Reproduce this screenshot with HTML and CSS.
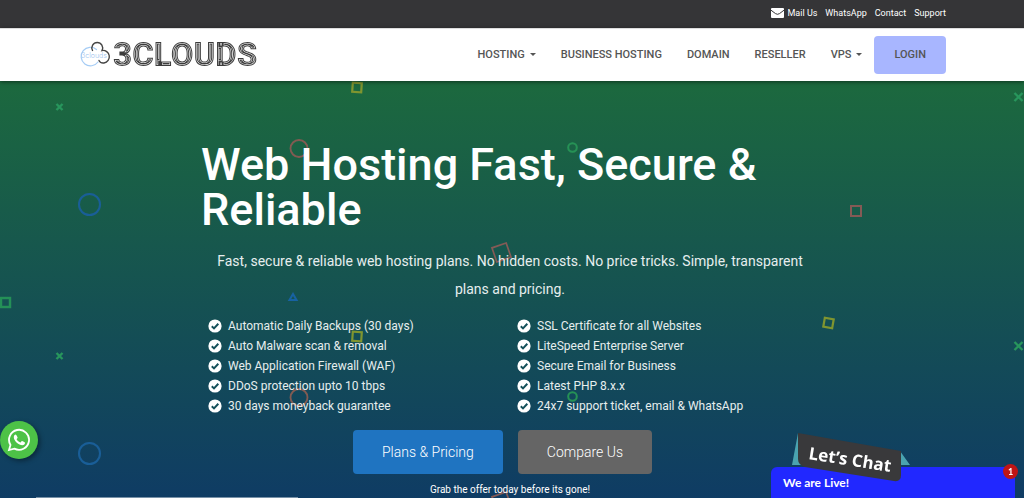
FILE: index.html
```html
<!DOCTYPE html>
<html lang="en">
<head>
<meta charset="utf-8">
<meta name="viewport" content="width=device-width, initial-scale=1">
<title>3Clouds</title>
<link rel="stylesheet" href="styles.css">
</head>
<body>
<svg class="sprite" aria-hidden="true">
  <symbol id="check" viewBox="0 0 14 14"><circle cx="7" cy="7" r="6.6" fill="#fff"/><path d="M3.8 7.3 6 9.4 10.3 4.8" fill="none" stroke="#14505a" stroke-width="2"/></symbol>
</svg>
<div class="topbar">
  <nav class="wrap toplinks" aria-label="Contact">
    <a href="#mail"><svg class="mail" viewBox="0 0 13 10"><rect width="13" height="10" rx="1" fill="#fff"/><path d="M0 2.2 4.5 5.6Q6.5 7 8.500 5.600L13 2.200" fill="none" stroke="#353537" stroke-width="1"/></svg>Mail Us</a>
    <a href="#whatsapp">WhatsApp</a>
    <a href="#contact">Contact</a>
    <a href="#support">Support</a>
  </nav>
</div>
<header class="header">
  <div class="wrap bar">
    <a class="logo" href="#home" aria-label="3Clouds home">
      <svg width="190" height="38" viewBox="0 0 190 38">
        <defs><clipPath id="word"><text class="brand" x="35" y="30">3CLOUDS</text></clipPath></defs>
        <g fill="none" stroke-linecap="round">
          <path d="M18.500 13.500A9.300 9.300 0 1 0 20 26" stroke="#a5ccf5" stroke-width="1.200"/>
          <path d="M14.500 14.500A5.400 5.400 0 1 1 24 14.500A6 6 0 1 1 26 27Q22.500 27.500 21 24.500" stroke="#444" stroke-width="1.400"/>
        </g>
        <text class="tiny" x="3" y="22">3clouds</text>
        <g clip-path="url(#word)">
          <text class="brand" x="35" y="30">3CLOUDS</text>
          <text class="brand ring ring-a" x="35" y="30" aria-hidden="true">3CLOUDS</text>
          <text class="brand ring ring-b" x="35" y="30" aria-hidden="true">3CLOUDS</text>
          <text class="brand ring ring-c" x="35" y="30" aria-hidden="true">3CLOUDS</text>
          <text class="brand ring ring-d" x="35" y="30" aria-hidden="true">3CLOUDS</text>
        </g>
      </svg>
    </a>
    <nav class="menu" aria-label="Main">
      <a class="drop" href="#hosting">HOSTING</a>
      <a href="#business">BUSINESS HOSTING</a>
      <a href="#domain">DOMAIN</a>
      <a href="#reseller">RESELLER</a>
      <a class="drop" href="#vps">VPS</a>
      <a class="login" href="#login">LOGIN</a>
    </nav>
  </div>
</header>
<main class="hero">
  <svg class="shapes" aria-hidden="true">
    <defs>
      <pattern id="confetti" width="1100" height="249" patternUnits="userSpaceOnUse">
        <g fill="none">
          <path d="M56.500 23 62.500 29M62.500 23 56.500 29M1014.500 12 1022.500 20M1022.500 12 1014.500 20" stroke="#27965c" stroke-width="2.300"/>
          <rect x="352.500" y="2" width="9" height="9" stroke="#80952f" stroke-width="2.200" transform="rotate(4 357 6.500)"/>
          <rect x="824" y="237.500" width="9" height="9" stroke="#80952f" stroke-width="2.200" transform="rotate(10 828.500 242)"/>
          <circle cx="299" cy="67.500" r="8.500" stroke="#835a51" stroke-width="1.800"/>
          <circle cx="572.500" cy="66.500" r="4.300" stroke="#259255" stroke-width="2"/>
          <circle cx="89.500" cy="123.500" r="10.500" stroke="#195e98" stroke-width="2"/>
          <rect x="851" y="125" width="10" height="10" stroke="#855a55" stroke-width="2"/>
          <rect x="494" y="164" width="15" height="15" stroke="#855a55" stroke-width="1.700" transform="rotate(-19 501.500 171.500)"/>
          <rect x="1" y="217" width="9" height="9" stroke="#249057" stroke-width="2.400"/>
          <path d="M293 213 296.500 219H289.500Z" stroke="#1762a3" stroke-width="2"/>
        </g>
      </pattern>
    </defs>
    <rect width="100%" height="100%" fill="url(#confetti)"/>
  </svg>
  <div class="pitch">
    <h1>Web Hosting Fast, Secure &amp; Reliable</h1>
    <p class="lead">Fast, secure &amp; reliable web hosting plans. No hidden costs. No price tricks. Simple, transparent plans and pricing.</p>
    <div class="features">
      <ul>
        <li><svg class="tick"><use href="#check"/></svg>Automatic Daily Backups (30 days)</li>
        <li><svg class="tick"><use href="#check"/></svg>Auto Malware scan &amp; removal</li>
        <li><svg class="tick"><use href="#check"/></svg>Web Application Firewall (WAF)</li>
        <li><svg class="tick"><use href="#check"/></svg>DDoS protection upto 10 tbps</li>
        <li><svg class="tick"><use href="#check"/></svg>30 days moneyback guarantee</li>
      </ul>
      <ul>
        <li><svg class="tick"><use href="#check"/></svg>SSL Certificate for all Websites</li>
        <li><svg class="tick"><use href="#check"/></svg>LiteSpeed Enterprise Server</li>
        <li><svg class="tick"><use href="#check"/></svg>Secure Email for Business</li>
        <li><svg class="tick"><use href="#check"/></svg>Latest PHP 8.x.x</li>
        <li><svg class="tick"><use href="#check"/></svg>24x7 support ticket, email &amp; WhatsApp</li>
      </ul>
    </div>
    <div class="actions">
      <a class="btn plans" href="#plans">Plans &amp; Pricing</a>
      <a class="btn compare" href="#compare">Compare Us</a>
    </div>
    <p class="note">Grab the offer today before its gone!</p>
  </div>
</main>
<a class="whatsapp" href="#whatsapp" aria-label="WhatsApp">
  <svg width="24" height="24" viewBox="0 0 24 24"><path d="M2 22 3.500 17A10 10 0 1 1 7.300 20.600Z" fill="none" stroke="#fff" stroke-width="1.800"/><path d="M8.500 6.500c-.6 0-1.700.9-1.700 2.700 0 3.700 5.200 8 8.500 8 1.700 0 2.700-1.200 2.700-2.500 0-.5-2.700-1.900-3.100-1.700-.5.200-1 1.600-1.500 1.500-1-.2-3.500-2.300-3.800-3.300-.1-.5 1-.9 1-1.500 0-.4-1.100-3.200-2.100-3.200Z" fill="#fff"/></svg>
</a>
<aside class="chat">
  <button class="live" type="button">We are Live!</button>
  <svg class="ribbon" width="120" height="50" viewBox="0 0 120 50">
    <path d="M6 0 0 32H12ZM108 18 118 32H106Z" fill="#4aa3b0"/>
    <path d="M6 0 109 18V42Q109 49 102 48L13 34Q6 32 6 26Z" fill="#39393b"/>
    <text class="ribbon-text" x="16" y="26" transform="rotate(9 16 26)">Let’s Chat</text>
  </svg>
  <span class="badge">1</span>
</aside>
<div class="status"></div>
</body>
</html>
```
FILE: styles.css
```css
* { box-sizing: border-box; }
body { margin: 0; font-family: Roboto, "Liberation Sans", sans-serif; color: #fff; background: #0f3c64; overflow: hidden; }
a { color: inherit; text-decoration: none; }
.sprite { position: absolute; width: 0; height: 0; }
.wrap { max-width: 868px; margin: 0 auto; }
.topbar { background: #353537; padding: 4px 0 6px; }
.toplinks { display: flex; justify-content: flex-end; gap: 8px; font-size: 9px; line-height: 18px; }
.toplinks a { display: flex; align-items: center; }
.mail { width: 13px; height: 10px; margin-right: 4px; }
.header { position: relative; z-index: 1; background: #fff; border-top: 1px solid #ddd; box-shadow: 0 1px 4px rgba(0, 0, 0, 0.5); color: #555; }
.bar { display: flex; align-items: center; justify-content: space-between; padding: 7px 0; }
.logo { display: flex; }
.brand { font: 900 33px Roboto, sans-serif; fill: #3c3c3c; }
.ring { fill: none; }
.ring-a { stroke: #fff; stroke-width: 6px; }
.ring-b { stroke: #3c3c3c; stroke-width: 5px; }
.ring-c { stroke: #fff; stroke-width: 3px; }
.ring-d { stroke: #3c3c3c; stroke-width: 2px; }
.tiny { font: 300 7px Inter, sans-serif; fill: #9fc6ef; }
.menu { display: flex; align-items: center; font-size: 11px; font-weight: 500; line-height: 18px; }
.menu a { margin-right: 25px; white-space: nowrap; }
.menu .drop::after { content: ""; display: inline-block; margin-left: 5px; vertical-align: 2px; border: 3px solid transparent; border-top-color: #555; border-bottom: 0; }
.menu a:nth-child(5) { margin-right: 12px; }
.menu .login { margin: 0; padding: 10px 20px; background: #a8b6ff; border-radius: 4px; }
.hero { position: relative; background: linear-gradient(#1c693e, #0f3c64); padding: 61px 4px 0 0; min-height: calc(100vh - 81px); }
.shapes { position: absolute; inset: 0; width: 100%; height: 100%; }
.pitch { position: relative; max-width: 618px; margin: 0 auto; }
h1 { margin: 0 0 15px; font-size: 45px; line-height: 45px; font-weight: 500; }
.lead { margin: 0 0 13px; padding: 0 15px; font-size: 14px; line-height: 28px; text-align: center; color: #e6eeee; }
.features { display: grid; grid-template-columns: 1fr 1fr; color: #e6eeee; }
.features ul { list-style: none; margin: 0; padding: 0 0 0 7px; font-size: 12px; line-height: 20px; }
.features li { display: flex; align-items: center; white-space: nowrap; }
.tick { width: 14px; height: 14px; margin-right: 6px; }
.actions { display: flex; justify-content: center; gap: 15px; padding: 14px 15px 0 0; }
.btn { padding: 12px 29px; border-radius: 4px; font-size: 14px; font-weight: 300; line-height: 20px; }
.plans { background: #1f74c1; }
.compare { background: #656565; }
.note { margin: 8px 0 0; font-size: 10px; line-height: 16px; text-align: center; }
.whatsapp { position: fixed; z-index: 2; left: 0; bottom: 39px; width: 38px; height: 38px; border-radius: 50%; background: #4dc247; display: flex; align-items: center; justify-content: center; box-shadow: 2px 2px 5px rgba(0, 0, 0, 0.4); }
.chat { position: fixed; z-index: 2; right: 9px; bottom: 0; width: 244px; font-family: Lato, sans-serif; }
.live { display: block; width: 100%; padding: 6px 12px 5px; border: 0; border-radius: 6px 6px 0 0; background: #2128ff; color: #fff; font: 700 12px/20px Lato, sans-serif; text-align: left; }
.ribbon { position: absolute; left: 21px; bottom: 15px; }
.ribbon-text { font: 700 17px "Open Sans", sans-serif; fill: #fff; }
.badge { position: absolute; right: -3px; top: -3px; width: 15px; height: 15px; border-radius: 50%; background: #c01515; font-size: 9px; font-weight: 700; line-height: 15px; text-align: center; }
.status { position: fixed; left: 36px; bottom: 0; width: 262px; height: 1px; background: #7891a8; }
```
